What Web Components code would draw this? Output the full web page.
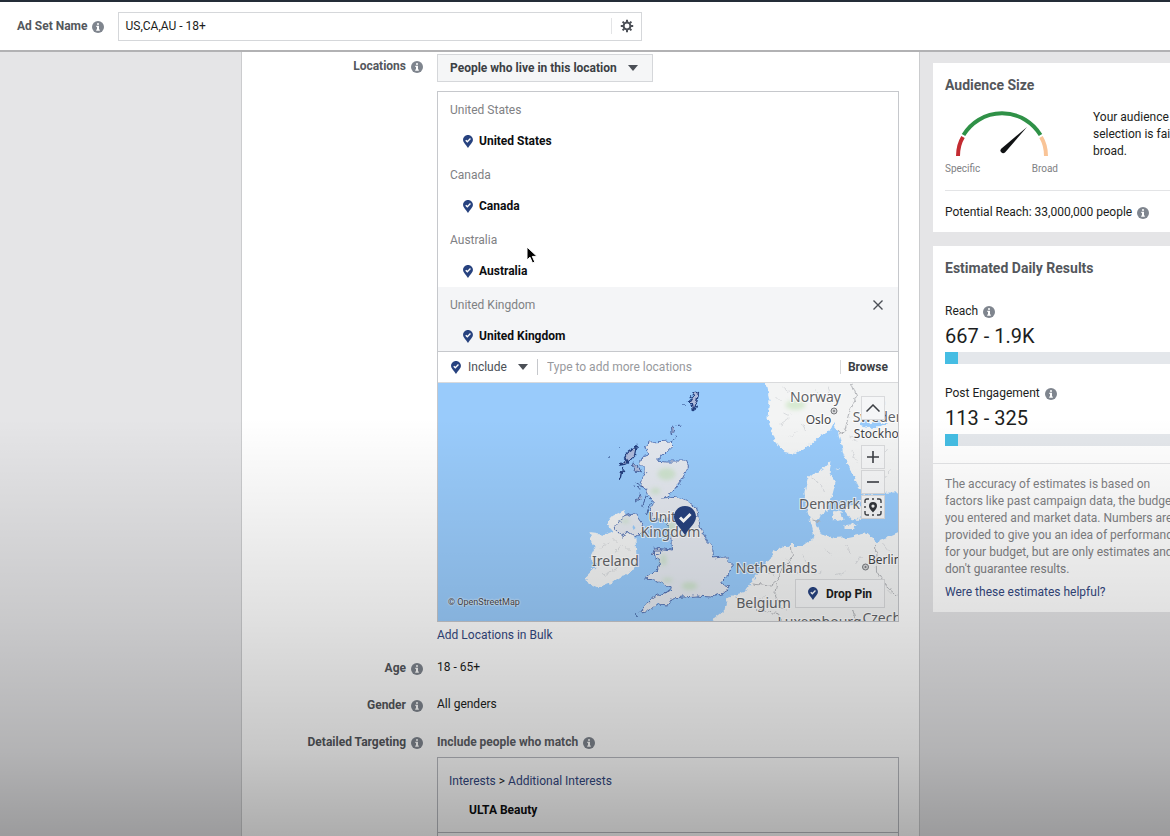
<!DOCTYPE html>
<html lang="en">
<head>
<meta charset="utf-8">
<meta name="viewport" content="width=device-width, initial-scale=1">
<title>Ad Set</title>
<style>
  html, body { margin: 0; height: 100%; }
  body { font: 12px/16px Roboto, "Liberation Sans", sans-serif; color: #1c1e21; background: #e5e5e7; }
</style>
</head>
<body>
<ad-set-page></ad-set-page>

<script>
const define = (name, html, setup) => {
  const template = document.createElement('template');
  template.innerHTML = html;
  customElements.define(name, class extends HTMLElement {
    constructor() {
      super();
      this.attachShadow({ mode: 'open' }).append(template.content.cloneNode(true));
    }
    connectedCallback() { if (setup) setup(this, this.shadowRoot); }
  });
};

/* Round grey "i" marker shown after labels */
define('info-icon', `
<style>
  :host { display: inline-block; width: 12px; height: 12px; flex: none; color: #7f858e; }
  svg { display: block; }
</style>
<svg width="12" height="12" viewBox="0 0 12 12" aria-hidden="true">
  <circle cx="6" cy="6" r="6" fill="currentColor"/>
  <path d="M5 2.200h2v1.600H5zM4.300 4.800H7v3.800h.8v1.200H4.200V8.600H5V6h-.7z" fill="#fff"/>
</svg>`);

/* Map pin with a tick */
define('pin-icon', `
<style>
  :host { display: inline-block; width: 10px; height: 13px; flex: none; }
  svg { display: block; width: 100%; height: 100%; }
</style>
<svg viewBox="0 0 22 29" aria-hidden="true">
  <path d="M11 0C4.800 0 0 4.800 0 10.800 0 17 6 21 11 29c5-8 11-12 11-18.200C22 4.800 17.200 0 11 0z" fill="#27427f"/>
  <path d="M6 11.500l3.500 3.500 7-7" fill="none" stroke="#fff" stroke-width="3"/>
</svg>`);

define('name-bar', `
<style>
  :host { display: block; background: #fff; border-top: 2px solid #242d38; border-bottom: 2px solid #b2b2b4; position: relative; z-index: 2; }
  .bar { display: flex; align-items: center; height: 48px; padding: 0 17px; gap: 14px; }
  label { display: flex; align-items: center; gap: 5px; font-weight: 700; color: #54575c; white-space: nowrap; }
  info-icon { margin-top: 2px; }
  .field { display: flex; align-items: center; flex: 0 1 522px; height: 27px; border: 1px solid #d5d7da; background: #fff; }
  input { flex: 1; min-width: 0; border: 0; outline: 0; padding: 0 6px; font: inherit; color: #1c1e21; background: none; }
  button { width: 30px; height: 16px; padding: 0; border: 0; border-left: 1px solid #e3e4e6; background: none; display: grid; place-items: center; }
</style>
<div class="bar">
  <label for="name">Ad Set Name <info-icon></info-icon></label>
  <div class="field">
    <input id="name" type="text" value="US,CA,AU - 18+">
    <button type="button" aria-label="Settings">
      <svg width="14" height="14" viewBox="0 0 14 14"><circle cx="7" cy="7" r="3.400" fill="none" stroke="#4b4f56" stroke-width="2"/><path d="M7 .8v2.200M7 11v2.200M.8 7H3M11 7h2.200M2.600 2.600l1.600 1.600M9.800 9.800l1.600 1.600M2.600 11.400l1.600-1.600M9.800 4.200l1.600-1.600" stroke="#4b4f56" stroke-width="2"/></svg>
    </button>
  </div>
</div>`);

/* Label on the left, content on the right */
define('form-row', `
<style>
  :host { display: grid; grid-template-columns: 181px minmax(0, 1fr); column-gap: 14px; align-items: start; }
  .label { display: flex; justify-content: flex-end; align-items: center; gap: 5px; padding-top: 1px; font-weight: 700; color: #54575c; white-space: nowrap; }
  :host([control]) .label { padding-top: 4px; }
  info-icon { margin-top: 2px; }
</style>
<div class="label"><slot name="label"></slot><info-icon></info-icon></div>
<div><slot></slot></div>`);

define('caret-select', `
<style>
  :host { display: inline-block; position: relative; }
  select { appearance: none; display: block; width: 100%; height: 100%; margin: 0; padding: 0 24px 0 var(--pad, 0); border: 0; outline: 0; background: none; color: inherit; font: inherit; }
  svg { position: absolute; right: var(--caret-right, 0); top: 50%; margin-top: -3px; pointer-events: none; }
</style>
<select></select>
<svg width="10" height="6" viewBox="0 0 10 6" aria-hidden="true"><path d="M0 0h10L5 6z" fill="#4b4f56"/></svg>`,
(host, root) => {
  const select = root.querySelector('select');
  select.setAttribute('aria-label', host.getAttribute('label'));
  select.replaceChildren(new Option(host.getAttribute('value')));
});

define('location-item', `
<style>
  :host { display: block; position: relative; height: 65px; padding: 10px 12px 0; box-sizing: border-box; }
  :host([active]) { background: #f4f5f7; height: 64px; }
  .group { color: #7f8184; }
  .place { display: flex; align-items: center; gap: 6px; margin: 15px 0 0 13px; font-weight: 700; color: #0d0e10; }
  button { display: none; position: absolute; right: 12px; top: 10px; width: 16px; height: 16px; padding: 0; border: 0; background: none; place-items: center; }
  :host([active]) button { display: grid; }
</style>
<div class="group"></div>
<div class="place"><pin-icon></pin-icon><span></span></div>
<button type="button" aria-label="Remove"><svg width="10" height="10" viewBox="0 0 10 10"><path d="M.5.5l9 9M9.500.5l-9 9" stroke="#4b4f56" stroke-width="1.400"/></svg></button>`,
(host, root) => {
  root.querySelector('.group').textContent = host.getAttribute('name');
  root.querySelector('span').textContent = host.getAttribute('name');
});

define('location-map', `
<style>
  :host { display: block; position: relative; height: 238px; overflow: hidden; background: #99cbfb; }
  .map { display: block; width: 100%; height: 100%; }
  text { font-family: "Noto Sans", sans-serif; font-size: 14px; fill: #626468; stroke: #fff; stroke-opacity: .8; stroke-width: 2px; paint-order: stroke; text-anchor: middle; }
  .city { font-size: 12px; fill: #444649; }
  button { font: inherit; padding: 0; border: 1px solid #d9dadc; background: #f5f6f7; color: #1c1e21; display: grid; place-items: center; box-sizing: border-box; }
  .controls { position: absolute; right: 13px; top: 13px; display: grid; gap: 1px; }
  .controls button { width: 24px; height: 24px; }
  .controls .up { margin-bottom: 24px; }
  .drop { position: absolute; right: 13px; bottom: 13px; width: 90px; height: 29px; display: flex; align-items: center; justify-content: center; gap: 8px; font-weight: 700; }
  .credit { position: absolute; left: 10px; bottom: 12px; font-size: 9px; line-height: 14px; color: #43474e; text-shadow: 0 0 2px #fff, 0 0 2px #fff; }
  .marker { position: absolute; left: calc(50% + 6px); top: 123px; width: 22px; height: 29px; }
</style>
<svg class="map" viewBox="438 383 461 238" preserveAspectRatio="xMidYMid slice" role="img" aria-label="Map of the United Kingdom">
  <defs>
    <filter id="coast" x="-5%" y="-5%" width="110%" height="110%"><feTurbulence type="fractalNoise" baseFrequency=".2" numOctaves="2" seed="4"/><feDisplacementMap in="SourceGraphic" scale="6" xChannelSelector="R" yChannelSelector="G"/></filter>
    <filter id="soft"><feGaussianBlur stdDeviation="2"/></filter>
  </defs>
  <g fill="#f3f4f4" filter="url(#coast)">
    <path d="M764 370l2 13 4 17-2 17 3 12 4 11 10 12 12 2 11-7 10-10 14-8 2-7 5 12 5 20 8 18 7 14 6 9 12-2 35-1V370z"/>
    <path d="M832 461l-2 12 6 10-4 15-4 12-8 5-4 8 7 12 12 3 14-1 19-4 10 9 21-9 20-4V640H700l12-20 13-10 3-13 17-5 10-14 15-18 5-10 17-5 12 0 11-8-3-12-6-20-1-13 3-13 8-7 8-3z"/>
    <path d="M834 511l8 1 2 8-7 2-5-5zM848 506l12-2 4 8-5 9-8-2-5-7zM845 525l12-1-3 5-9 0zM836 469l3-1 0 2z"/>
    <path d="M625 510l-12 6-6 8 7 8-8 3-16-2 5 15-5 10 8 7-11 11 2 7 10 5 17-7 18-11 3-12-1-20z"/>
  </g>
  <g filter="url(#coast)">
    <path d="M862 417l9 2-4 5 13-3 8 3-7 3-12 1-8-3zM878 400l8 3-5 4z" fill="#99cbfb"/>
  </g>
  <g filter="url(#coast)" fill="#e4e8ef" stroke="#5875b4" stroke-width="1" stroke-linejoin="round">
    <path d="M650 442l22-1v6l-14 13 8 1h21l2 5-9 17-8 10-8 5 12-2 11 4 10 8 4 20 6 12 5 5 1 13 12-1 8 8-5 11-8 7 9 3-4 7-13 4-16-1-23 2-5 7-9-1-11 7-7 1 13-15 16-6 1-4-16-7-10-1 14-11 2-8-8-5 2-7 18 2-1-17-5-8 2-6-13 1-5-8 3-10-6-7-2-6-5-3 2-8 4-7-7-7 3-8 6-2-3-9z"/>
    <path d="M614 529l9-12 12-4 7 10 2 9-8 5-8-5-6 4z"/>
    <path d="M655 550l5 0 0 4-5 1z"/>
  </g>
  <g filter="url(#coast)" fill="#aebbdc" stroke="#243f80" stroke-width="1.400">
    <path d="M637 446l-8 5-4 7 4 5 6-7zM626 459l-5 6 6-1zM624 467l-2 10-2 3M696 392l-3 4-4 6 4 2 1 7 3-8 2-10z"/>
    <path d="M608 457h1M620 448h1M684 405h1M642 529l2 2-1 3M636 615h1" stroke-width="2.200"/>
    <path d="M672 427l3 2-2 6zM677 426l4-1M675 436l3 2M672 441l3-2" stroke-width="1" stroke="#46619f"/>
    <path d="M634 463l5 4 4 6-7-2-3-5zM638 484l6 3M634 487l7 1M641 493l-4 8 4-2M647 496l-5 12M652 500l-5 14" stroke-width="1" stroke="#46619f"/>
  </g>
  <g filter="url(#soft)" fill="#b9dfae" opacity=".5">
    <ellipse cx="667" cy="474" rx="9" ry="6"/><ellipse cx="656" cy="491" rx="5" ry="3"/><ellipse cx="672" cy="527" rx="4" ry="6"/><ellipse cx="664" cy="560" rx="3" ry="6"/><ellipse cx="668" cy="580" rx="5" ry="2"/><ellipse cx="690" cy="586" rx="8" ry="4"/><ellipse cx="626" cy="521" rx="4" ry="2"/><ellipse cx="796" cy="405" rx="10" ry="5"/>
  </g>
  <path d="M634 525l2 3-2 2-1-3z" fill="#99cbfb"/>
  <g fill="none" stroke="#b3b5b9" filter="url(#coast)">
    <path d="M852 383l5 13-7 15-3 13-2 8-4 2-3-4M813 520l9 2M792 546l1 12-11 12-3 10-8 6-18-2M876 543l1 28 8 14 14 12M778 584l-2 12 4 9 7 5M735 598l14 7 12 5 18 4 4 7M853 609l3 10"/>
  </g>
  <g fill="none" stroke="#d2d4d8" stroke-width=".8" filter="url(#coast)">
    <path d="M600 548l10-6M604 560l8 3M615 553l7-8M618 566l-5 6M628 558l-8 3M603 575l9-3M626 546l5 5M614 539l5 5"/>
    <path d="M776 396l6 6M780 425l9-6M790 437l8-5M806 431l-3-8M785 412l6 3M815 390l6 7M820 425l-4-7M870 450l-5 12M852 450l6 13M887 450l-6 10M892 470l-7 8M850 436l7 5M873 481l8-6M826 395l5-8M790 392l-6-5M812 478l8 4M825 492l-4-8M815 505l6-4M785 558l8 7M803 555l5 8M825 548l7 6M846 545l6 8M862 556l-6 8M823 570l-7 5M836 575l9-4M890 552l-6-8M888 590l6 6M768 572l7 3M760 600l5-5M800 574l-7-5"/>
  </g>
  <g fill="#d4d5d7" stroke="#77797d"><circle cx="834.500" cy="411" r="3"/><circle cx="866" cy="567" r="3"/></g>
  <g fill="#77797d"><circle cx="834.500" cy="411" r="1"/><circle cx="866" cy="567" r="1"/></g>
  <text x="816" y="402">Norway</text>
  <text x="819" y="424" class="city">Oslo</text>
  <text x="879" y="422">Sweden</text>
  <text x="884" y="438" class="city">Stockholm</text>
  <text x="830" y="509">Denmark</text>
  <text><tspan x="671" y="522">United</tspan><tspan x="671" y="537">Kingdom</tspan></text>
  <text x="616" y="566">Ireland</text>
  <text x="777" y="573">Netherlands</text>
  <text x="885" y="564" class="city">Berlin</text>
  <text x="764" y="608">Belgium</text>
  <text x="820" y="627">Luxembourg</text>
  <text x="888" y="623">Czechia</text>
</svg>
<pin-icon class="marker"></pin-icon>
<div class="controls">
  <button type="button" class="up" aria-label="Collapse map"><svg width="14" height="8" viewBox="0 0 14 8"><path d="M.5 7.500L7 1l6.500 6.500" fill="none" stroke="#3c3f44" stroke-width="1.500"/></svg></button>
  <button type="button" aria-label="Zoom in"><svg width="12" height="12" viewBox="0 0 12 12"><path d="M6 0v12M0 6h12" stroke="#3c3f44" stroke-width="1.600"/></svg></button>
  <button type="button" aria-label="Zoom out"><svg width="12" height="12" viewBox="0 0 12 12"><path d="M0 6h12" stroke="#3c3f44" stroke-width="1.600"/></svg></button>
  <button type="button" aria-label="Center map"><svg width="18" height="18" viewBox="0 0 18 18"><path d="M1 5V3q0-2 2-2h2M13 1h2q2 0 2 2v2M17 13v2q0 2-2 2h-2M5 17H3q-2 0-2-2v-2M8 1h2M8 17h2M1 8v2M17 8v2" fill="none" stroke="#3c3f44" stroke-width="1.400"/><path d="M9 4A4 4 0 0 0 5 8C5 10.500 7 12 9 14.500 11 12 13 10.500 13 8A4 4 0 0 0 9 4zm0 2.500a1.600 1.600 0 1 1 0 3.200 1.600 1.600 0 0 1 0-3.200z" fill="#33363b"/></svg></button>
</div>
<button type="button" class="drop"><pin-icon></pin-icon>Drop Pin</button>
<div class="credit">© OpenStreetMap</div>`);

define('location-picker', `
<style>
  :host { display: block; position: relative; border: 1px solid #c6c8cc; background: #fff; }
  .add { display: flex; align-items: center; height: 30px; border-top: 1px solid #c6c8cc; border-bottom: 1px solid #d9dadc; padding: 0 10px 0 13px; }
  caret-select { width: 69px; height: 20px; margin-left: 7px; color: #4b4f56; }
  input { flex: 1; min-width: 0; height: 16px; padding: 0 0 0 9px; border: 0; border-left: 1px solid #c6c8cc; outline: 0; font: inherit; background: none; }
  input::placeholder { color: #97999d; opacity: 1; }
  .browse { height: 14px; padding: 0 0 0 7px; border: 0; border-left: 1px solid #d9dadc; background: none; font: inherit; font-weight: 700; color: #3c3f44; line-height: 14px; }
  .pointer { position: absolute; left: 88px; top: 154px; pointer-events: none; }
</style>
<location-item name="United States"></location-item>
<location-item name="Canada"></location-item>
<location-item name="Australia"></location-item>
<location-item name="United Kingdom" active></location-item>
<div class="add">
  <pin-icon></pin-icon>
  <caret-select label="Include or exclude" value="Include" style="--caret-right: 9px"></caret-select>
  <input type="text" aria-label="Add locations" placeholder="Type to add more locations">
  <button type="button" class="browse">Browse</button>
</div>
<location-map></location-map>
<svg class="pointer" width="12" height="18" viewBox="0 0 12 18" aria-hidden="true"><path d="M1 1v13l3-2.800L6.500 17l2.300-1-2.500-5.600H11z" fill="#000" stroke="#fff"/></svg>`);

define('targeting-form', `
<style>
  :host { display: flex; flex-direction: column; background: #fff; border: solid #cbccce; border-width: 0 1px; padding: 2px 20px 40px 0; box-sizing: border-box; min-width: 0; }
  a { color: #33487f; text-decoration: none; }
  .who { width: 216px; height: 28px; box-sizing: border-box; border: 1px solid #d5d7da; background: #f5f6f7; font-weight: 700; color: #3c3f44; --pad: 12px; --caret-right: 14px; }
  location-picker { margin-top: 9px; }
  .bulk { display: block; margin-top: 5px; }
  .age { margin-top: 16px; }
  .gender, .detail { margin-top: 20px; }
  .match { display: flex; align-items: center; gap: 5px; padding-top: 1px; font-weight: 700; color: #5d6066; }
  .match info-icon { margin-top: 2px; }
  .box { margin-top: 7px; border: 1px solid #b8bac0; }
  .interest { padding: 15px 11px 14px; border-bottom: 1px solid #b8bac0; }
  .name { margin: 13px 0 0 20px; font-weight: 700; color: #0d0e10; }
  .rest { height: 60px; }
</style>
<form-row control>
  <span slot="label">Locations</span>
  <caret-select class="who" label="Location type" value="People who live in this location"></caret-select>
  <location-picker></location-picker>
  <a class="bulk" href="#bulk">Add Locations in Bulk</a>
</form-row>
<form-row class="age"><span slot="label">Age</span>18 - 65+</form-row>
<form-row class="gender"><span slot="label">Gender</span>All genders</form-row>
<form-row class="detail">
  <span slot="label">Detailed Targeting</span>
  <div class="match">Include people who match <info-icon></info-icon></div>
  <div class="box">
    <div class="interest">
      <div><a href="#interests">Interests</a> &gt; <a href="#additional">Additional Interests</a></div>
      <div class="name">ULTA Beauty</div>
    </div>
    <div class="rest"></div>
  </div>
</form-row>`);

define('audience-card', `
<style>
  :host { display: block; background: #fff; padding: 14px 12px 12px; }
  h2 { margin: 0; font-size: 14px; line-height: 16px; color: #54575c; }
  .row { display: flex; gap: 35px; margin-top: 16px; }
  .gauge { flex: none; width: 113px; }
  .gauge svg { display: block; margin: 0 auto; }
  .ends { display: flex; justify-content: space-between; font-size: 10px; line-height: 14px; color: #7f8184; margin-top: 5px; }
  p { margin: 0; flex: 1; line-height: 17px; }
  .reach { display: flex; align-items: center; gap: 5px; border-top: 1px solid #e3e4e6; margin-top: 14px; padding-top: 13px; }
  info-icon { margin-top: 2px; }
</style>
<h2>Audience Size</h2>
<div class="row">
  <div class="gauge">
    <svg width="94" height="48" viewBox="0 0 94 48" fill="none" stroke-width="4" role="img" aria-label="Fairly broad">
      <path d="M3 47Q3 36 8 28" stroke="#c32b31"/>
      <path d="M8.500 26A45 45 0 0 1 85.500 26" stroke="#2f9147"/>
      <path d="M86 28Q91 36 91 47" stroke="#f9c497"/>
      <path d="M72 18L46.500 39.500a2.600 2.600 0 1 0 3.500 4z" fill="#101214"/>
    </svg>
    <div class="ends"><span>Specific</span><span>Broad</span></div>
  </div>
  <p>Your audience selection is fairly broad.</p>
</div>
<div class="reach">Potential Reach: 33,000,000 people <info-icon></info-icon></div>`);

define('result-meter', `
<style>
  :host { display: block; }
  .title { display: flex; align-items: center; gap: 5px; }
  info-icon { margin-top: 2px; }
  .value { font-size: 20px; line-height: 24px; margin-top: 5px; }
  .track { height: 12px; margin-top: 4px; background: #e4e7eb; }
  .fill { width: 13px; height: 12px; background: #45bde3; }
</style>
<div class="title"><slot></slot><info-icon></info-icon></div>
<div class="value"><slot name="value"></slot></div>
<div class="track"><div class="fill"></div></div>`);

define('results-card', `
<style>
  :host { display: block; background: #fff; }
  .results { padding: 14px 12px 17px; border-bottom: 1px solid #e3e4e6; }
  h2 { margin: 0 0 27px; font-size: 14px; line-height: 16px; color: #54575c; }
  result-meter + result-meter { margin-top: 21px; }
  .note { padding: 12px 22px 12px 12px; color: #7f8184; }
  p { margin: 0 0 6px; line-height: 17px; }
  a { color: #33487f; text-decoration: none; }
</style>
<div class="results">
  <h2>Estimated Daily Results</h2>
  <result-meter>Reach<span slot="value">667 - 1.9K</span></result-meter>
  <result-meter>Post Engagement<span slot="value">113 - 325</span></result-meter>
</div>
<div class="note">
  <p>The accuracy of estimates is based on factors like past campaign data, the budget you entered and market data. Numbers are provided to give you an idea of performance for your budget, but are only estimates and don't guarantee results.</p>
  <a href="#feedback">Were these estimates helpful?</a>
</div>`);

define('ad-set-page', `
<style>
  :host { display: flex; flex-direction: column; height: 100vh; overflow: hidden; position: relative; }
  .body { flex: 1; min-height: 0; display: grid; grid-template-columns: 241px minmax(0, 1fr) 250px; overflow: hidden auto; scrollbar-width: none; }
  aside { display: flex; flex-direction: column; gap: 14px; padding: 11px 0 0 13px; overflow: hidden; box-sizing: border-box; }
  audience-card, results-card { width: 274px; box-sizing: border-box; }
  .shade { position: absolute; inset: 0; z-index: 3; pointer-events: none; background: linear-gradient(transparent 50%, rgba(0,0,0,.12) 74%, rgba(0,0,0,.22) 90%, rgba(0,0,0,.32) 100%); }
</style>
<name-bar></name-bar>
<div class="body">
  <div></div>
  <targeting-form></targeting-form>
  <aside><audience-card></audience-card><results-card></results-card></aside>
</div>
<div class="shade"></div>`);
</script>
</body>
</html>
